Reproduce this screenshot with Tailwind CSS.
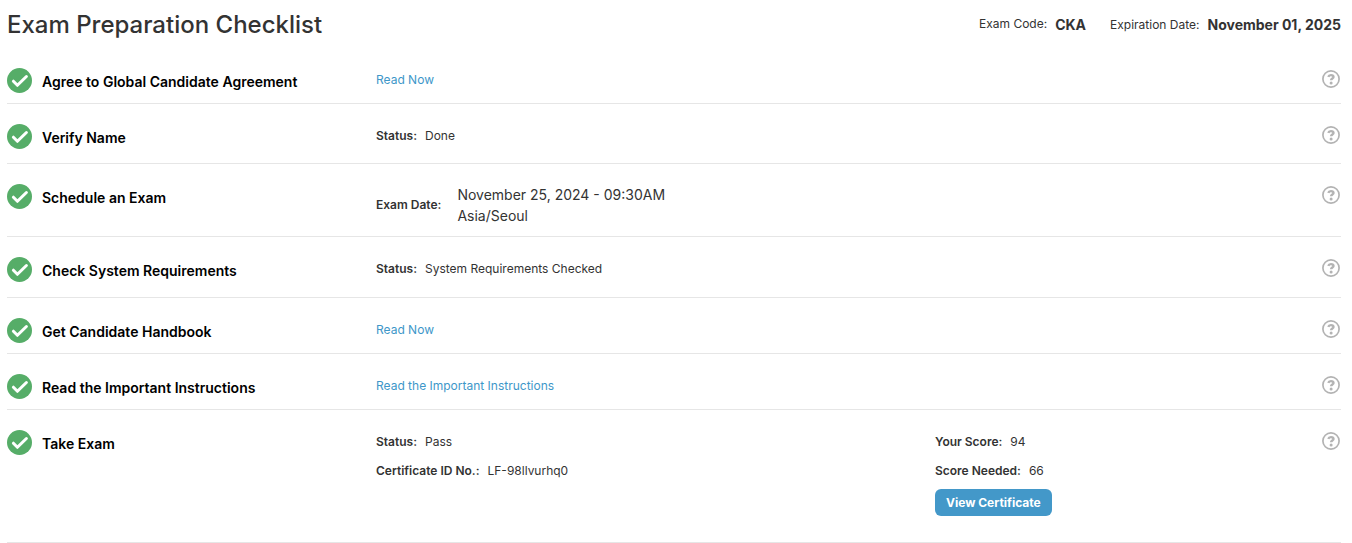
<!DOCTYPE html>
<html lang="en">
<head>
  <meta charset="UTF-8" />
  <title>Exam Preparation Checklist</title>
  <meta name="viewport" content="width=device-width, initial-scale=1.0" />
  <script src="https://cdn.jsdelivr.net/npm/@tailwindcss/browser@4"></script>
</head>
<body class="bg-white font-['Inter',sans-serif] text-xs leading-6 text-[#333]">

  <!-- Shared icons -->
  <svg class="hidden" aria-hidden="true">
    <symbol id="check" viewBox="0 0 25 25">
      <circle cx="12.5" cy="12.5" r="12.5" fill="#56ad68" />
      <path d="M6.4 13.2l4 4.1 9-8.8" fill="none" stroke="#fff" stroke-width="3" stroke-linecap="round" stroke-linejoin="round" />
    </symbol>
    <symbol id="help" viewBox="0 0 18 18">
      <circle cx="9" cy="9" r="8.1" fill="none" stroke="#b3b3b3" stroke-width="1.7" />
      <path d="M6.3 6.9c.4-1.3 1.3-1.8 2.6-1.8 1.5 0 2.6.7 2.6 1.9 0 1.6-2.4 1.5-2.4 3.3" fill="none" stroke="#b3b3b3" stroke-width="2.4" />
      <circle cx="9.1" cy="13" r="1.5" fill="#b3b3b3" />
    </symbol>
  </svg>

  <main class="pl-[7px] pr-[11px]">
    <header class="flex h-12 items-start justify-between">
      <h1 class="pt-[9px] text-2xl font-medium">Exam Preparation Checklist</h1>
      <dl class="flex gap-6 pt-3">
        <div class="flex gap-2">
          <dt>Exam Code:</dt>
          <dd class="text-sm leading-[26px] font-bold">CKA</dd>
        </div>
        <div class="flex gap-2">
          <dt class="leading-[26px]">Expiration Date:</dt>
          <dd class="text-sm leading-[26px] font-bold">November 01, 2025</dd>
        </div>
      </dl>
    </header>

    <ul>
      <li class="grid grid-cols-[369fr_559fr_387fr_19px] items-start border-b border-[#e6e6e6] pt-5 pb-[7px]">
        <div class="flex gap-[10px]">
          <svg class="size-[25px]"><use href="#check" /></svg>
          <h2 class="text-sm leading-7 font-semibold text-black">Agree to Global Candidate Agreement</h2>
        </div>
        <a href="#" class="justify-self-start text-[#3e97c9]">Read Now</a>
        <button type="button" aria-label="Help" class="col-start-4 pt-[2px]"><svg class="size-[18px]"><use href="#help" /></svg></button>
      </li>

      <li class="grid grid-cols-[369fr_559fr_387fr_19px] items-start border-b border-[#e6e6e6] pt-5 pb-[11px]">
        <div class="flex gap-[10px]">
          <svg class="size-[25px]"><use href="#check" /></svg>
          <h2 class="text-sm leading-7 font-semibold text-black">Verify Name</h2>
        </div>
        <p class="flex gap-2"><b class="font-semibold">Status:</b> Done</p>
        <button type="button" aria-label="Help" class="col-start-4 pt-[2px]"><svg class="size-[18px]"><use href="#help" /></svg></button>
      </li>

      <li class="grid grid-cols-[369fr_559fr_387fr_19px] items-start border-b border-[#e6e6e6] pt-5 pb-[10px]">
        <div class="flex gap-[10px]">
          <svg class="size-[25px]"><use href="#check" /></svg>
          <h2 class="text-sm leading-7 font-semibold text-black">Schedule an Exam</h2>
        </div>
        <p class="flex items-center gap-4">
          <b class="font-semibold">Exam Date:</b>
          <span class="text-sm leading-[21px]">November 25, 2024 - 09:30AM<br />Asia/Seoul</span>
        </p>
        <button type="button" aria-label="Help" class="col-start-4 pt-[2px]"><svg class="size-[18px]"><use href="#help" /></svg></button>
      </li>

      <li class="grid grid-cols-[369fr_559fr_387fr_19px] items-start border-b border-[#e6e6e6] pt-5 pb-3">
        <div class="flex gap-[10px]">
          <svg class="size-[25px]"><use href="#check" /></svg>
          <h2 class="text-sm leading-7 font-semibold text-black">Check System Requirements</h2>
        </div>
        <p class="flex gap-2"><b class="font-semibold">Status:</b> System Requirements Checked</p>
        <button type="button" aria-label="Help" class="col-start-4 pt-[2px]"><svg class="size-[18px]"><use href="#help" /></svg></button>
      </li>

      <li class="grid grid-cols-[369fr_559fr_387fr_19px] items-start border-b border-[#e6e6e6] pt-5 pb-[7px]">
        <div class="flex gap-[10px]">
          <svg class="size-[25px]"><use href="#check" /></svg>
          <h2 class="text-sm leading-7 font-semibold text-black">Get Candidate Handbook</h2>
        </div>
        <a href="#" class="justify-self-start text-[#3e97c9]">Read Now</a>
        <button type="button" aria-label="Help" class="col-start-4 pt-[2px]"><svg class="size-[18px]"><use href="#help" /></svg></button>
      </li>

      <li class="grid grid-cols-[369fr_559fr_387fr_19px] items-start border-b border-[#e6e6e6] pt-5 pb-[7px]">
        <div class="flex gap-[10px]">
          <svg class="size-[25px]"><use href="#check" /></svg>
          <h2 class="text-sm leading-7 font-semibold text-black">Read the Important Instructions</h2>
        </div>
        <a href="#" class="justify-self-start text-[#3e97c9]">Read the Important Instructions</a>
        <button type="button" aria-label="Help" class="col-start-4 pt-[2px]"><svg class="size-[18px]"><use href="#help" /></svg></button>
      </li>

      <li class="grid grid-cols-[369fr_559fr_387fr_19px] items-start border-b border-[#e6e6e6] pt-5 pb-[26px]">
        <div class="flex gap-[10px]">
          <svg class="size-[25px]"><use href="#check" /></svg>
          <h2 class="text-sm leading-7 font-semibold text-black">Take Exam</h2>
        </div>
        <div class="flex flex-col gap-[5px]">
          <p class="flex gap-2"><b class="font-semibold">Status:</b> Pass</p>
          <p class="flex gap-2"><b class="font-semibold">Certificate ID No.:</b> LF-98llvurhq0</p>
        </div>
        <div class="flex flex-col items-start">
          <p class="mb-[5px] flex gap-2"><b class="font-semibold">Your Score:</b> 94</p>
          <p class="mb-[6px] flex gap-2"><b class="font-semibold">Score Needed:</b> 66</p>
          <button type="button" class="rounded-md bg-[#4398c9] px-[11px] leading-[27px] font-bold text-white">View Certificate</button>
        </div>
        <button type="button" aria-label="Help" class="col-start-4 pt-[2px]"><svg class="size-[18px]"><use href="#help" /></svg></button>
      </li>
    </ul>
  </main>

</body>
</html>
